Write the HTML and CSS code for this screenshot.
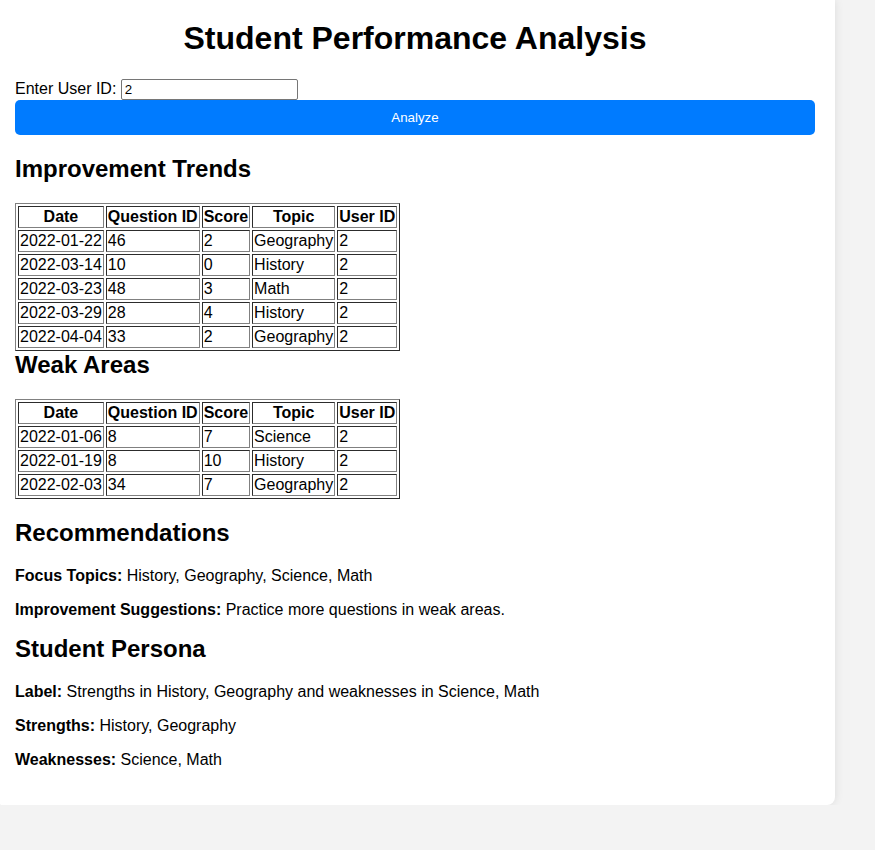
FILE: index.html
```html
<!DOCTYPE html>
<html lang="en">
<head>
<meta charset="utf-8">
<title>Student Performance Analysis</title>
<link rel="stylesheet" href="styles.css">
</head>
<body>
<div class="container">
  <h1 class="title">Student Performance Analysis</h1>
  <div class="form-row">
    <label for="uid">Enter User ID:</label> <input id="uid" class="uid-input" type="text" value="2">
  </div>
  <button class="analyze-btn" type="button">Analyze</button>

  <h2 class="section-title">Improvement Trends</h2>
  <table class="data-table">
    <thead>
      <tr><th>Date</th><th>Question ID</th><th>Score</th><th>Topic</th><th>User ID</th></tr>
    </thead>
    <tbody>
      <tr><td>2022-01-22</td><td>46</td><td>2</td><td>Geography</td><td>2</td></tr>
      <tr><td>2022-03-14</td><td>10</td><td>0</td><td>History</td><td>2</td></tr>
      <tr><td>2022-03-23</td><td>48</td><td>3</td><td>Math</td><td>2</td></tr>
      <tr><td>2022-03-29</td><td>28</td><td>4</td><td>History</td><td>2</td></tr>
      <tr><td>2022-04-04</td><td>33</td><td>2</td><td>Geography</td><td>2</td></tr>
    </tbody>
  </table>

  <h2 class="section-title tight">Weak Areas</h2>
  <table class="data-table">
    <thead>
      <tr><th>Date</th><th>Question ID</th><th>Score</th><th>Topic</th><th>User ID</th></tr>
    </thead>
    <tbody>
      <tr><td>2022-01-06</td><td>8</td><td>7</td><td>Science</td><td>2</td></tr>
      <tr><td>2022-01-19</td><td>8</td><td>10</td><td>History</td><td>2</td></tr>
      <tr><td>2022-02-03</td><td>34</td><td>7</td><td>Geography</td><td>2</td></tr>
    </tbody>
  </table>

  <h2 class="section-title">Recommendations</h2>
  <p class="info"><strong>Focus Topics:</strong> History, Geography, Science, Math</p>
  <p class="info"><strong>Improvement Suggestions:</strong> Practice more questions in weak areas.</p>

  <h2 class="section-title persona">Student Persona</h2>
  <p class="info"><strong>Label:</strong> Strengths in History, Geography and weaknesses in Science, Math</p>
  <p class="info"><strong>Strengths:</strong> History, Geography</p>
  <p class="info"><strong>Weaknesses:</strong> Science, Math</p>
</div>
</body>
</html>
```

FILE: styles.css
```css
html, body {
  margin: 0;
  padding: 0;
}

body {
  background: #f3f3f3;
  font-family: "Liberation Sans", Arial, sans-serif;
  font-size: 16px;
  color: #000;
}

.container {
  width: 800px;
  margin-left: -5px;
  padding: 20px 20px 20px;
  background: #fff;
  border-radius: 0 0 8px 8px;
  box-shadow: 0 0 10px rgba(0, 0, 0, 0.1);
}

.title {
  margin: 0 0 21px;
  font-size: 32px;
  font-weight: bold;
  text-align: center;
  line-height: 37px;
}

.form-row {
  line-height: 18px;
  padding-top: 1px;
}

.uid-input {
  box-sizing: border-box;
  width: 177px;
  height: 21px;
  padding: 1px 3px;
  border: 1px solid #767676;
  border-radius: 2px;
  font-family: "Liberation Sans", Arial, sans-serif;
  font-size: 13.33px;
  vertical-align: baseline;
}

.analyze-btn {
  display: block;
  width: 100%;
  height: 35px;
  margin-top: 0;
  border: none;
  border-radius: 5px;
  background: #007bff;
  color: #fff;
  font-family: "Liberation Sans", Arial, sans-serif;
  font-size: 13.33px;
  cursor: pointer;
}

.section-title {
  font-size: 24px;
  font-weight: bold;
  margin: 20px 0 20px;
  line-height: 28px;
}

.section-title.tight {
  margin-top: 0;
}

.section-title.persona {
  margin-top: 16px;
}

.data-table {
  border: 1px outset #808080;
  border-spacing: 2px;
  font-size: 16px;
}

.data-table th,
.data-table td {
  border: 1px inset #808080;
  padding: 1px;
  line-height: 18px;
}

.data-table th {
  font-weight: bold;
  text-align: center;
}

.data-table td {
  text-align: left;
}

.info {
  margin: 16px 0;
  line-height: 18px;
}
```
